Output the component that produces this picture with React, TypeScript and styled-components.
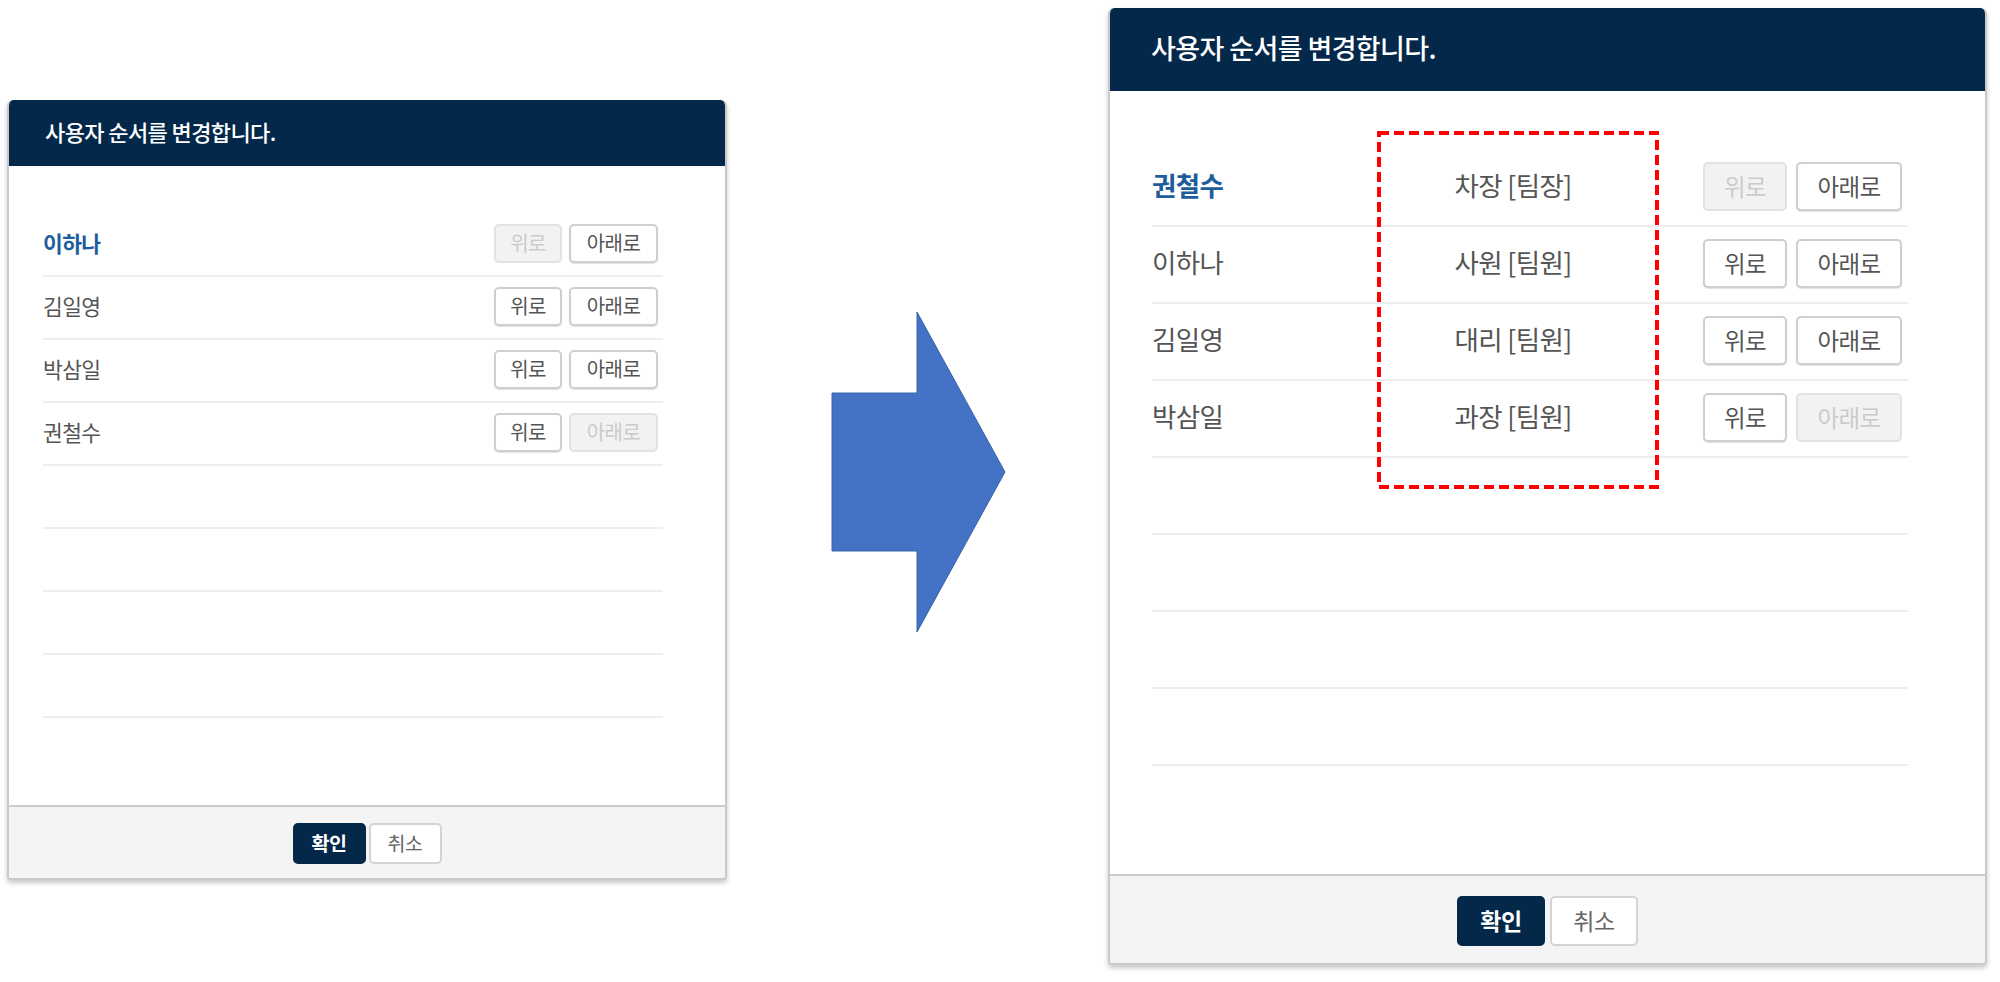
import React from "react";
import styled, { createGlobalStyle, css } from "styled-components";

type Size = "sm" | "lg";

const S = {
  sm: {
    width: 720, height: 780, headH: 66, headPad: 38, headFont: 22, headLift: 4,
    bodyPadTop: 48, bodyPadL: 36, bodyPadR: 62, rowH: 63, nameFont: 21.5, nameLift: 4,
    btnFont: 20, btnH: 39, upW: 68, downW: 89, btnGap: 7, btnEnd: 5,
    footH: 73, fBtnW: 73, fBtnH: 41, fGap: 3, fFont: 19.5,
  },
  lg: {
    width: 879, height: 957, headH: 83, headPad: 43, headFont: 27, headLift: 4,
    bodyPadTop: 59, bodyPadL: 44, bodyPadR: 77, rowH: 77, nameFont: 26.5, nameLift: 6,
    btnFont: 23.5, btnH: 49, upW: 84, downW: 106, btnGap: 9, btnEnd: 6,
    footH: 89, fBtnW: 88, fBtnH: 50, fGap: 5, fFont: 23,
  },
};

const GlobalStyle = createGlobalStyle`
  html, body {
    margin: 0;
    padding: 0;
    background: #ffffff;
  }
  body {
    font-family: "Noto Sans CJK KR", "Noto Sans", sans-serif;
    color: #555;
  }
  * { box-sizing: border-box; }
`;

const Stage = styled.div`
  display: flex;
  align-items: flex-start;
  width: 2000px;
  height: 982px;
  padding-left: 7px;
  overflow: hidden;
`;

const Dialog = styled.section<{ $size: Size }>`
  position: relative;
  display: flex;
  flex-direction: column;
  flex: none;
  width: ${(p) => S[p.$size].width}px;
  height: ${(p) => S[p.$size].height}px;
  margin-top: ${(p) => (p.$size === "sm" ? 100 : 8)}px;
  background: #fff;
  border: 2px solid #c9c9c9;
  border-top: none;
  border-radius: 6px 6px 4px 4px;
  box-shadow: 0 3px 5px rgba(0, 0, 0, 0.22);
  overflow: hidden;
`;

const Header = styled.header<{ $size: Size }>`
  display: flex;
  align-items: center;
  flex: none;
  height: ${(p) => S[p.$size].headH}px;
  margin: 0 -2px;
  padding-left: ${(p) => S[p.$size].headPad}px;
  padding-bottom: ${(p) => S[p.$size].headLift}px;
  background: #03284a;
  color: #fff;
  font-size: ${(p) => S[p.$size].headFont}px;
  font-weight: 500;
  letter-spacing: -0.6px;
  border-radius: 6px 6px 0 0;
`;

const Body = styled.div<{ $size: Size }>`
  flex: 1;
  padding: ${(p) => S[p.$size].bodyPadTop}px ${(p) => S[p.$size].bodyPadR}px 0
    ${(p) => S[p.$size].bodyPadL - 2}px;
`;

const List = styled.ul`
  list-style: none;
  margin: 0;
  padding: 0;
`;

const Row = styled.li<{ $size: Size }>`
  display: grid;
  grid-template-columns: ${(p) =>
    p.$size === "lg" ? "225px 272px 1fr" : "1fr auto"};
  align-items: center;
  height: ${(p) => S[p.$size].rowH}px;
  border-bottom: 2px solid #eeeeee;
`;

const Name = styled.span<{ $size: Size; $active?: boolean }>`
  padding-bottom: ${(p) => S[p.$size].nameLift}px;
  font-size: ${(p) => S[p.$size].nameFont}px;
  letter-spacing: -0.6px;
  color: #555;
  ${(p) =>
    p.$active &&
    css`
      color: #1d5d9b;
      font-weight: 700;
    `}
`;

const Position = styled.span<{ $size: Size }>`
  justify-self: center;
  padding-bottom: ${(p) => S[p.$size].nameLift}px;
  font-size: ${(p) => S[p.$size].nameFont}px;
  letter-spacing: -0.6px;
  color: #555;
`;

const Buttons = styled.div<{ $size: Size }>`
  justify-self: end;
  display: flex;
  gap: ${(p) => S[p.$size].btnGap}px;
  margin-top: -2px;
  margin-right: ${(p) => S[p.$size].btnEnd}px;
`;

const MoveButton = styled.button<{ $size: Size; $w: number }>`
  width: ${(p) => p.$w}px;
  height: ${(p) => S[p.$size].btnH}px;
  padding: 0 0 2px;
  font-family: inherit;
  font-size: ${(p) => S[p.$size].btnFont}px;
  letter-spacing: -0.6px;
  color: #555;
  background: #fff;
  border: 2px solid #cfcfcf;
  border-radius: 5px;
  box-shadow: 0 1px 1px rgba(0, 0, 0, 0.12);
  cursor: pointer;
  &:disabled {
    background: #f2f2f2;
    border-color: #e2e2e2;
    color: #cbcbcb;
    box-shadow: none;
    cursor: default;
  }
`;

const Footer = styled.footer<{ $size: Size }>`
  display: flex;
  justify-content: center;
  align-items: center;
  gap: ${(p) => S[p.$size].fGap}px;
  flex: none;
  height: ${(p) => S[p.$size].footH}px;
  padding-top: 2px;
  background: #f4f4f4;
  border-top: 2px solid #cccccc;
`;

const FooterButton = styled.button<{ $size: Size; $primary?: boolean }>`
  width: ${(p) => S[p.$size].fBtnW}px;
  height: ${(p) => S[p.$size].fBtnH}px;
  padding: 0 0 2px;
  font-family: inherit;
  font-size: ${(p) => S[p.$size].fFont}px;
  letter-spacing: -0.5px;
  border-radius: 5px;
  cursor: pointer;
  ${(p) =>
    p.$primary
      ? css`
          background: #03284a;
          color: #fff;
          font-weight: 700;
          border: 2px solid #03284a;
        `
      : css`
          background: #fff;
          color: #666;
          border: 2px solid #d3d3d3;
        `}
`;

const Highlight = styled.svg`
  position: absolute;
  left: 267px;
  top: 123px;
  width: 282px;
  height: 358px;
  pointer-events: none;
`;

const ArrowWrap = styled.svg`
  flex: none;
  width: 175px;
  height: 322px;
  margin-top: 311px;
  margin-left: 104px;
  margin-right: 102px;
`;

type Person = { name: string; pos?: string; first?: boolean; last?: boolean };

const leftPeople: Person[] = [
  { name: "이하나", first: true },
  { name: "김일영" },
  { name: "박삼일" },
  { name: "권철수", last: true },
];

const rightPeople: Person[] = [
  { name: "권철수", pos: "차장 [팀장]", first: true },
  { name: "이하나", pos: "사원 [팀원]" },
  { name: "김일영", pos: "대리 [팀원]" },
  { name: "박삼일", pos: "과장 [팀원]", last: true },
];

function OrderDialog({ size, people }: { size: Size; people: Person[] }) {
  const cfg = S[size];
  const empty = 8 - people.length;
  return (
    <Dialog $size={size}>
      <Header $size={size}>사용자 순서를 변경합니다.</Header>
      <Body $size={size}>
        <List>
          {people.map((p) => (
            <Row key={p.name} $size={size}>
              <Name $size={size} $active={p.first}>
                {p.name}
              </Name>
              {p.pos && <Position $size={size}>{p.pos}</Position>}
              <Buttons $size={size}>
                <MoveButton $size={size} $w={cfg.upW} disabled={p.first}>
                  위로
                </MoveButton>
                <MoveButton $size={size} $w={cfg.downW} disabled={p.last}>
                  아래로
                </MoveButton>
              </Buttons>
            </Row>
          ))}
          {Array.from({ length: empty }).map((_, i) => (
            <Row key={`e${i}`} $size={size} />
          ))}
        </List>
      </Body>
      <Footer $size={size}>
        <FooterButton $size={size} $primary>
          확인
        </FooterButton>
        <FooterButton $size={size}>취소</FooterButton>
      </Footer>
      {size === "lg" && (
        <Highlight viewBox="0 0 282 358">
          <rect
            x="2"
            y="2"
            width="278"
            height="354"
            fill="none"
            stroke="#ff0000"
            strokeWidth="4"
            strokeDasharray="10 5"
          />
        </Highlight>
      )}
    </Dialog>
  );
}

export default function App() {
  return (
    <>
      <GlobalStyle />
      <Stage>
        <OrderDialog size="sm" people={leftPeople} />
        <ArrowWrap viewBox="0 0 175 322">
          <polygon
            points="1,82 86,82 86,1 174,161 86,321 86,240 1,240"
            fill="#4472c4"
            stroke="#3a62aa"
            strokeWidth="1"
          />
        </ArrowWrap>
        <OrderDialog size="lg" people={rightPeople} />
      </Stage>
    </>
  );
}
